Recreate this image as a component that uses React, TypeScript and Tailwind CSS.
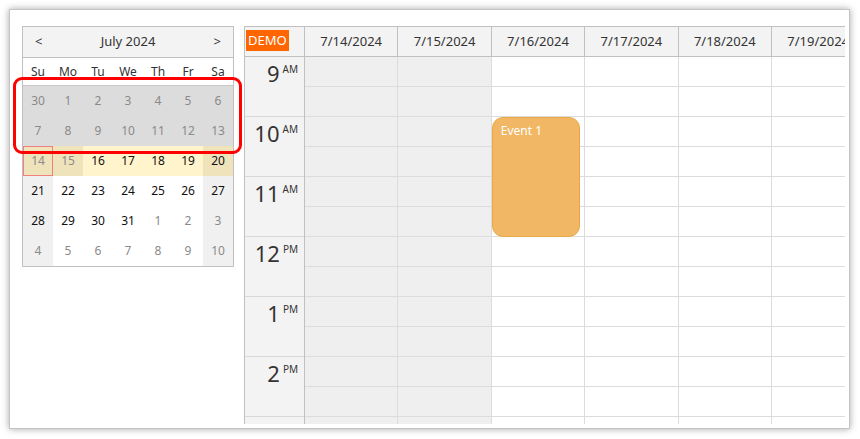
const font = { fontFamily: '"Segoe UI", "Noto Sans", "Open Sans", sans-serif' };

type DayCell = { d: number; muted: boolean; bg: string; today?: boolean };

const weeks: DayCell[][] = (() => {
  const rows: number[][] = [
    [30, 1, 2, 3, 4, 5, 6],
    [7, 8, 9, 10, 11, 12, 13],
    [14, 15, 16, 17, 18, 19, 20],
    [21, 22, 23, 24, 25, 26, 27],
    [28, 29, 30, 31, 1, 2, 3],
    [4, 5, 6, 7, 8, 9, 10],
  ];
  return rows.map((r, ri) =>
    r.map((d, ci) => {
      const weekend = ci === 0 || ci === 6;
      if (ri < 2) return { d, muted: true, bg: 'bg-[#dcdcdc]' };
      if (ri === 2) {
        const dark = ci === 0 || ci === 1 || ci === 6;
        return {
          d,
          muted: ci < 2,
          bg: dark ? 'bg-[#efe3bc]' : 'bg-[#fff4cc]',
          today: ci === 0,
        };
      }
      const other = (ri === 4 && ci > 3) || ri === 5;
      return { d, muted: other, bg: weekend ? 'bg-[#f0f0f0]' : 'bg-white' };
    })
  );
})();

const Navigator = () => (
  <div className="w-[212px] border border-[#c0c0c0] bg-white text-[12px] text-[#333]">
    <div className="h-[31px] flex items-center justify-between px-[12px] bg-[#f3f3f3] border-b border-[#c0c0c0]">
      <span className="text-[13px]">&lt;</span>
      <span className="text-[13px]">July 2024</span>
      <span className="text-[13px]">&gt;</span>
    </div>
    <div className="h-[28px] grid grid-cols-7 border-b border-[#c8c8c8]">
      {['Su', 'Mo', 'Tu', 'We', 'Th', 'Fr', 'Sa'].map((n) => (
        <div key={n} className="flex items-center justify-center text-[12px] text-[#333]">
          {n}
        </div>
      ))}
    </div>
    {weeks.map((w, i) => (
      <div key={i} className="grid grid-cols-7">
        {w.map((c, j) => (
          <div
            key={j}
            className={`h-[30px] flex items-center justify-center ${c.bg} ${
              c.muted ? 'text-[#8a8a8a]' : 'text-[#111]'
            } ${c.today ? 'border border-[#f08080]' : ''}`}
          >
            {c.d}
          </div>
        ))}
      </div>
    ))}
  </div>
);

const days = ['7/14/2024', '7/15/2024', '7/16/2024', '7/17/2024', '7/18/2024', '7/19/2024'];
const hours: [string, string][] = [
  ['9', 'AM'],
  ['10', 'AM'],
  ['11', 'AM'],
  ['12', 'PM'],
  ['1', 'PM'],
  ['2', 'PM'],
  ['', ''],
];

const Calendar = () => (
  <div className="w-[601px] h-[398px] overflow-hidden border-l border-t border-[#c0c0c0] bg-white text-[#333]">
    <div className="flex h-[30px] bg-[#f3f3f3] border-b border-[#c0c0c0]">
      <div className="w-[60px] shrink-0 border-r border-[#c0c0c0] pl-[1px]">
        <span className="inline-block bg-[#ff6600] text-white text-[13px] leading-[21px] px-[2px]">DEMO</span>
      </div>
      {days.map((d) => (
        <div
          key={d}
          className="w-[93.4px] shrink-0 border-r border-[#c0c0c0] flex items-center justify-center text-[13px]"
        >
          {d}
        </div>
      ))}
    </div>
    <div className="flex">
      <div className="w-[60px] shrink-0 bg-[#f3f3f3] border-r border-[#c0c0c0]">
        {hours.map(([h, s], k) => (
          <div key={k} className="h-[60px] border-b border-[#d8d8d8] flex justify-end pr-[6px] pt-[1px]">
            <span className="text-[22px] leading-[30px]">{h}</span>
            <span className="text-[10px] leading-[10px] mt-[6px] ml-[3px]">{s}</span>
          </div>
        ))}
      </div>
      {days.map((d, i) => (
        <div
          key={d}
          className={`relative w-[93.4px] shrink-0 border-r border-[#dcdcdc] ${i < 2 ? 'bg-[#efefef]' : 'bg-white'}`}
        >
          {Array.from({ length: 14 }).map((_, k) => (
            <div key={k} className="h-[30px] border-b border-[#dcdcdc]" />
          ))}
          {i === 2 && (
            <div className="absolute left-[0px] top-[60px] w-[88px] h-[120px] rounded-[11px] bg-[#f1b764] border border-[#e9a846] text-white text-[12px] pl-[8px] pt-[4px]">
              Event 1
            </div>
          )}
        </div>
      ))}
    </div>
  </div>
);

export default function App() {
  return (
    <div className="w-[860px] h-[439px] bg-white pl-[9px] pt-[9px]" style={font}>
      <div className="relative w-[841px] h-[420px] bg-white border border-[#c4c4c4] shadow-[0_0_7px_rgba(0,0,0,0.35)] flex items-start gap-[10px] pl-[12px] pt-[16px]">
        <Navigator />
        <Calendar />
        <div className="absolute left-[3px] top-[67px] w-[229px] h-[77px] border-[3px] border-[#ff0000] rounded-[9px] pointer-events-none" />
      </div>
    </div>
  );
}
